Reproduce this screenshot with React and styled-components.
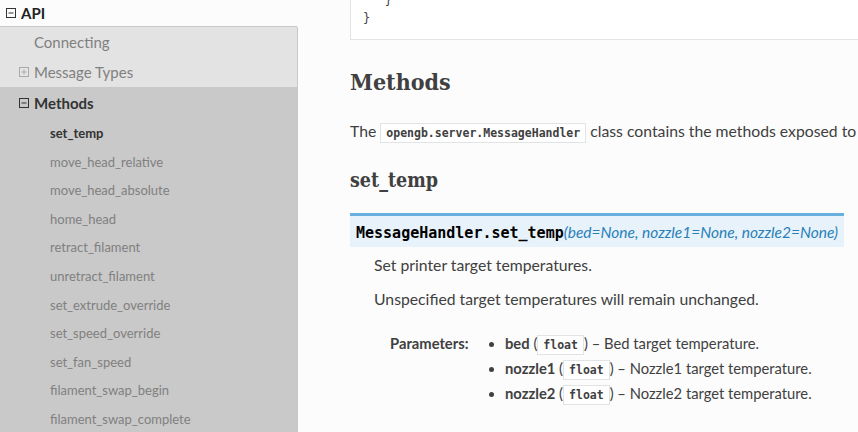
import React from 'react';
import styled, { createGlobalStyle } from 'styled-components';

const GlobalStyle = createGlobalStyle`
  html, body {
    margin: 0;
    padding: 0;
    background: #fcfcfc;
  }
  body {
    font-family: Lato, "Open Sans", sans-serif;
    color: #404040;
    overflow: hidden;
  }
`;

const Page = styled.div`
  display: flex;
  width: 858px;
  height: 432px;
  overflow: hidden;
  background: #fcfcfc;
`;

const Sidebar = styled.nav`
  flex: 0 0 298px;
  display: flex;
  flex-direction: column;
  min-height: 0;
`;

const TopItem = styled.div`
  flex-shrink: 0;
  display: flex;
  align-items: center;
  gap: 5px;
  height: 26px;
  padding-left: 6px;
  font-size: 15px;
  font-weight: 700;
  color: #222;
  border-bottom: 1px solid #c9c9c9;
  margin-right: 1px;
`;

const SubList = styled.div`
  flex: 1;
  min-height: 0;
  overflow: hidden;
  display: flex;
  flex-direction: column;
  background: #e3e3e3;
  border-right: 1px solid #c9c9c9;
`;

const SubItem = styled.div`
  flex-shrink: 0;
  display: flex;
  align-items: center;
  gap: 5px;
  height: ${p => p.$h || 30}px;
  padding-left: 19px;
  font-size: 15px;
  color: ${p => (p.$current ? '#333' : '#808080')};
  font-weight: ${p => (p.$current ? 700 : 400)};
`;

const Current = styled.div`
  flex: 1 0 auto;
  background: #c9c9c9;
`;

const Child = styled.div`
  display: flex;
  align-items: center;
  height: 28.6px;
  padding-left: 50px;
  font-size: 13px;
  color: ${p => (p.$current ? '#333' : '#808080')};
  font-weight: ${p => (p.$current ? 700 : 400)};
`;

const IconSlot = styled.span`
  display: inline-flex;
  width: 10px;
  height: 10px;
  color: ${p => p.$color || '#444'};
`;

const Toggle = ({ open, color }) => (
  <IconSlot $color={color}>
    <svg width="10" height="10" viewBox="0 0 10 10">
      <rect x="0.5" y="0.5" width="9" height="9" fill="none" stroke="currentColor" strokeWidth="1" />
      <line x1="2.5" y1="5" x2="7.5" y2="5" stroke="currentColor" strokeWidth="1" />
      {!open && <line x1="5" y1="2.5" x2="5" y2="7.5" stroke="currentColor" strokeWidth="1" />}
    </svg>
  </IconSlot>
);

const Main = styled.main`
  flex: 1;
  padding-left: 52px;
  min-width: 0;
`;

const CodeBlock = styled.pre`
  margin: -22px 0 0;
  width: 800px;
  padding: 12px;
  background: #fff;
  border: 1px solid #e1e4e5;
  font-family: "DejaVu Sans Mono", monospace;
  font-size: 12px;
  line-height: 18px;
  color: #404040;
`;

const H2 = styled.h2`
  margin: 28px 0 0;
  font-family: "DejaVu Serif Condensed", "DejaVu Serif", serif;
  font-stretch: condensed;
  font-weight: 700;
  font-size: 23px;
  line-height: 27.6px;
  color: #404040;
`;

const H3 = styled.h3`
  margin: 26px 0 0;
  font-family: "DejaVu Serif Condensed", "DejaVu Serif", serif;
  font-stretch: condensed;
  font-weight: 700;
  font-size: 19.5px;
  line-height: 24px;
  color: #404040;
`;

const P = styled.p`
  margin: ${p => p.$m || '0 0 10px'};
  font-size: 15.75px;
  line-height: 24px;
  white-space: nowrap;
`;

const Literal = styled.code`
  font-family: "DejaVu Sans Mono", monospace;
  font-weight: 700;
  font-size: 11.5px;
  line-height: 1;
  padding: 2px 5px;
  background: #fff;
  border: 1px solid #e1e4e5;
  color: #404040;
`;

const Signature = styled.dl`
  margin: 20px 0 0;
`;

const Dt = styled.dt`
  display: table;
  padding: 6px;
  line-height: 19px;
  background: #e7f2fa;
  border-top: 3px solid #6ab0de;
  white-space: nowrap;
`;

const Name = styled.code`
  font-family: "DejaVu Sans Mono", monospace;
  font-weight: 700;
  font-size: 15px;
  line-height: 1;
  color: #000;
`;

const Args = styled.em`
  font-size: 15.5px;
  line-height: 1;
  color: #2980b9;
`;

const Dd = styled.dd`
  margin: 6px 0 0 24px;
`;

const Fields = styled.div`
  display: grid;
  grid-template-columns: 115px 1fr;
  margin: 20px 0 0 16px;
  font-size: 14.75px;
  line-height: 25px;
`;

const FieldName = styled.div`
  font-weight: 700;
  line-height: 24px;
  margin-top: 0.5px;
`;

const ParamList = styled.ul`
  margin: 0;
  padding: 0;
  list-style: disc;
  white-space: nowrap;
  & li {
    height: 25px;
  }
  & li::marker {
    font-size: 14px;
  }
`;

const children = [
  'set_temp',
  'move_head_relative',
  'move_head_absolute',
  'home_head',
  'retract_filament',
  'unretract_filament',
  'set_extrude_override',
  'set_speed_override',
  'set_fan_speed',
  'filament_swap_begin',
  'filament_swap_complete',
];

const params = [
  ['bed', 'Bed target temperature.'],
  ['nozzle1', 'Nozzle1 target temperature.'],
  ['nozzle2', 'Nozzle2 target temperature.'],
];

export default function App() {
  return (
    <>
      <GlobalStyle />
      <Page>
        <Sidebar>
          <TopItem>
            <Toggle open color="#333" />
            API
          </TopItem>
          <SubList>
            <SubItem>
              <IconSlot />
              Connecting
            </SubItem>
            <SubItem>
              <Toggle color="#aaa" />
              Message Types
            </SubItem>
            <Current>
              <SubItem $current $h={31.7}>
                <Toggle open color="#333" />
                Methods
              </SubItem>
              {children.map((c, i) => (
                <Child key={c} $current={i === 0}>{c}</Child>
              ))}
            </Current>
          </SubList>
        </Sidebar>
        <Main>
          <CodeBlock>{'   }\n}'}</CodeBlock>
          <H2>Methods</H2>
          <P $m="23px 0 0">
            The <Literal>opengb.server.MessageHandler</Literal> class contains the methods exposed to clients.
          </P>
          <H3>set_temp</H3>
          <Signature>
            <Dt>
              <Name>MessageHandler.set_temp</Name>
              <Args>(bed=None, nozzle1=None, nozzle2=None)</Args>
            </Dt>
            <Dd>
              <P>Set printer target temperatures.</P>
              <P>Unspecified target temperatures will remain unchanged.</P>
              <Fields>
                <FieldName>Parameters:</FieldName>
                <ParamList>
                  {params.map(([n, d]) => (
                    <li key={n}>
                      <strong>{n}</strong> (<Literal>float</Literal>) – {d}
                    </li>
                  ))}
                </ParamList>
              </Fields>
            </Dd>
          </Signature>
        </Main>
      </Page>
    </>
  );
}
